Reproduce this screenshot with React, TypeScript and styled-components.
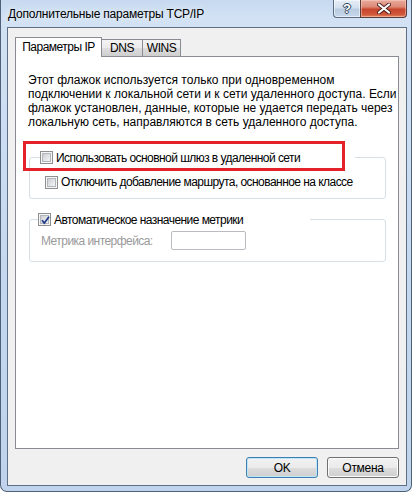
import React from 'react'
import styled, { createGlobalStyle } from 'styled-components'

const GlobalStyle = createGlobalStyle`
	html, body {
		margin: 0;
		padding: 0;
		background: #ffffff;
	}
	body {
		font-family: "Liberation Sans", Arial, sans-serif;
		font-size: 12px;
		color: #000000;
	}
	* {
		box-sizing: border-box;
	}
`

const Window = styled.div`
	width: 412px;
	height: 492px;
	display: flex;
	flex-direction: column;
	padding: 0 4px 5px 6px;
	border: 1px solid #4f6178;
	border-top: none;
	border-radius: 0 0 7px 7px;
	background: linear-gradient(to bottom, #c6d9f0 0%, #d2e2f4 18px, #c3d7ee 60%, #bfd4ec 100%);
`

const TitleBar = styled.div`
	height: 27px;
	display: flex;
	align-items: flex-start;
	padding-left: 1px;
`

const Title = styled.div`
	margin-top: 4px;
	line-height: 20px;
	letter-spacing: -0.2px;
	text-shadow: 0 0 6px rgba(255, 255, 255, 0.9);
`

const Caption = styled.div`
	margin-left: auto;
	display: flex;
	height: 18px;
`

const HelpButton = styled.div`
	width: 27px;
	height: 18px;
	border: 1px solid #5a6b82;
	border-top: none;
	border-right: none;
	border-radius: 0 0 0 4px;
	background: linear-gradient(to bottom, #e6edf6 0%, #d4e0ee 45%, #b9cbe0 55%, #c8d8ea 100%);
	box-shadow: inset 0 0 0 1px rgba(255, 255, 255, 0.55);
	display: flex;
	align-items: center;
	justify-content: center;
	color: #ffffff;
	font-weight: bold;
	font-size: 13px;
	text-shadow: 0 0 1px #33465e, 1px 0 0 #33465e, -1px 0 0 #33465e, 0 1px 0 #33465e, 0 -1px 0 #33465e;
`

const CloseButton = styled.div`
	width: 47px;
	height: 18px;
	border: 1px solid #5a3b3a;
	border-top: none;
	border-radius: 0 0 4px 0;
	background: linear-gradient(to bottom, #e9aa9c 0%, #dd8a77 40%, #c8452e 55%, #d0583c 85%, #e38a5f 100%);
	box-shadow: inset 0 0 0 1px rgba(255, 220, 210, 0.45);
	display: flex;
	align-items: center;
	justify-content: center;
`

const Client = styled.div`
	flex: 1;
	display: flex;
	flex-direction: column;
	border: 1px solid #5d6f84;
	background: #f0f0f0;
	padding: 9px 7px 7px 7px;
`

const TabStrip = styled.div`
	height: 19px;
	display: flex;
	align-items: flex-end;
	position: relative;
	z-index: 1;
`

const Tab = styled.div<{ $active?: boolean; $width: number }>`
	width: ${p => p.$width}px;
	height: ${p => (p.$active ? 20 : 17)}px;
	margin-bottom: ${p => (p.$active ? -1 : 0)}px;
	margin-left: ${p => (p.$active ? 0 : -1)}px;
	position: relative;
	z-index: ${p => (p.$active ? 2 : 1)};
	border: 1px solid #898c95;
	border-bottom: none;
	background: ${p => (p.$active
		? '#ffffff'
		: 'linear-gradient(to bottom, #f3f3f3 0%, #ebebeb 50%, #dddddd 51%, #cfcfcf 100%)')};
	display: flex;
	align-items: center;
	justify-content: center;
	padding-bottom: ${p => (p.$active ? 1 : 0)}px;
	letter-spacing: -0.5px;
`

const Pane = styled.div`
	flex: 1;
	border: 1px solid #898c95;
	background: #ffffff;
	padding: 16px 12px 0 12px;
`

const Info = styled.p`
	margin: 0;
	line-height: 14px;
	white-space: nowrap;
`

const Group = styled.fieldset<{ $top: number; $inset: number }>`
	margin: ${p => p.$top}px 0 0 1px;
	min-width: 0;
	padding: 0 0 ${p => (p.$inset === 10 ? 8 : 11)}px ${p => p.$inset}px;
	border: 1px solid #d5dfe5;
	border-radius: 3px;
`

const Legend = styled.legend<{ $width: number }>`
	width: ${p => p.$width}px;
	height: 15px;
	padding: 0;
	display: flex;
	align-items: center;
	gap: 3px;
	position: relative;
`

const Highlight = styled.div`
	position: absolute;
	left: -17px;
	top: -9px;
	width: 322px;
	height: 30px;
	border: 3px solid #e4222a;
`

const Row = styled.div<{ $top: number; $left: number; $height: number }>`
	display: flex;
	align-items: center;
	gap: 3px;
	height: ${p => p.$height}px;
	margin: ${p => p.$top}px 0 0 ${p => p.$left}px;
`

const Label = styled.span<{ $disabled?: boolean }>`
	color: ${p => (p.$disabled ? '#9a9a9a' : '#000000')};
	white-space: nowrap;
	letter-spacing: -0.55px;
`

const MetricLabel = styled(Label)`
	width: 127px;
`

const Field = styled.div`
	width: 75px;
	height: 19px;
	border: 1px solid #b9bcc1;
	border-radius: 2px;
	background: #ffffff;
`

const Box = styled.span`
	width: 13px;
	height: 13px;
	flex: none;
	display: flex;
	padding: 1px;
	border: 1px solid #8e8f8f;
	background: #f6f6f6;
	position: relative;
`

const BoxFill = styled.span`
	flex: 1;
	border: 1px solid #b3b7bc;
	background: linear-gradient(135deg, #cbced3 0%, #e0e2e5 50%, #f4f4f5 100%);
`

const Tick = styled.svg`
	position: absolute;
	left: 1px;
	top: 1px;
`

const Footer = styled.div`
	display: flex;
	justify-content: flex-end;
	gap: 9px;
	margin-top: 8px;
`

const Button = styled.div<{ $default?: boolean }>`
	width: 72px;
	height: 21px;
	border: 1px solid ${p => (p.$default ? '#3c7fb1' : '#707070')};
	border-radius: 3px;
	background: linear-gradient(to bottom, #f2f2f2 0%, #ebebeb 50%, #dddddd 51%, #cfcfcf 100%);
	box-shadow: inset 0 0 0 1px ${p => (p.$default ? '#bfe6f8' : '#fbfbfb')};
	display: flex;
	align-items: center;
	justify-content: center;
	letter-spacing: -0.3px;
`

function Checkbox({ checked }: { checked?: boolean }) {
	return (
		<Box>
			<BoxFill />
			{checked && (
				<Tick width="11" height="11" viewBox="0 0 11 11">
					<path d="M2 5.2 L4.3 8 L9 1.8" fill="none" stroke="#233d8c" strokeWidth="1.8" />
				</Tick>
			)}
		</Box>
	)
}

const App = () => (
	<>
		<GlobalStyle />
		<Window>
			<TitleBar>
				<Title>Дополнительные параметры TCP/IP</Title>
				<Caption>
					<HelpButton>?</HelpButton>
					<CloseButton>
						<svg width="14" height="11" viewBox="0 0 14 11">
							<path d="M2 1.5 L12 9.5 M12 1.5 L2 9.5" stroke="#4a1f1a" strokeWidth="4" strokeLinecap="round" />
							<path d="M2 1.5 L12 9.5 M12 1.5 L2 9.5" stroke="#ffffff" strokeWidth="2.2" strokeLinecap="round" />
						</svg>
					</CloseButton>
				</Caption>
			</TitleBar>
			<Client>
				<TabStrip>
					<Tab $active $width={87}>Параметры IP</Tab>
					<Tab $width={42}>DNS</Tab>
					<Tab $width={39}>WINS</Tab>
				</TabStrip>
				<Pane>
					<Info>
						Этот флажок используется только при одновременном<br />
						подключении к локальной сети и к сети удаленного доступа. Если<br />
						флажок установлен, данные, которые не удается передать через<br />
						локальную сеть, направляются в сеть удаленного доступа.
					</Info>
					<Group $top={21} $inset={10}>
						<Legend $width={315}>
							<Checkbox />
							<Label>Использовать основной шлюз в удаленной сети</Label>
							<Highlight />
						</Legend>
						<Row $top={9} $left={5} $height={16}>
							<Checkbox />
							<Label>Отключить добавление маршрута, основанное на классе</Label>
						</Row>
					</Group>
					<Group $top={13} $inset={8}>
						<Legend $width={272}>
							<Checkbox checked />
							<Label>Автоматическое назначение метрики</Label>
						</Legend>
						<Row $top={4} $left={3} $height={19}>
							<MetricLabel $disabled>Метрика интерфейса:</MetricLabel>
							<Field />
						</Row>
					</Group>
				</Pane>
				<Footer>
					<Button $default>OK</Button>
					<Button>Отмена</Button>
				</Footer>
			</Client>
		</Window>
	</>
)

export default App
